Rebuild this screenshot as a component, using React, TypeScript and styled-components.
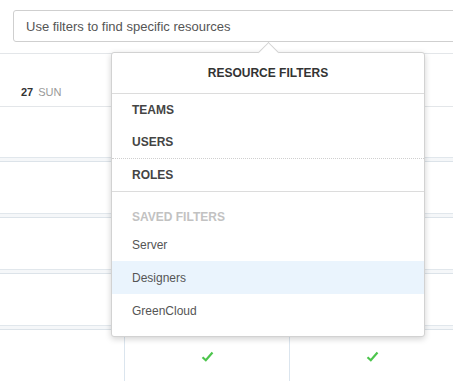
import React from 'react'
import styled, { createGlobalStyle } from 'styled-components'

const GlobalStyle = createGlobalStyle`
  body {
    margin: 0;
    font-family: "Liberation Sans", Arial, sans-serif;
    background: #fff;
    overflow: hidden;
  }
`

const Page = styled.div`
  position: relative;
  width: 453px;
  height: 382px;
  overflow: hidden;
`

const SearchArea = styled.div`
  padding: 10px 0 11px 13px;
  border-bottom: 1px solid #e3e6e9;
`

const SearchInput = styled.div`
  width: 460px;
  height: 30px;
  border: 1px solid #cfcfcf;
  border-radius: 3px;
  display: flex;
  align-items: center;
  padding-left: 12px;
  font-size: 13px;
  color: #555;
`

const DayHeader = styled.div`
  height: 53px;
  display: flex;
  align-items: flex-end;
  padding: 0 0 8px 21px;
  box-sizing: border-box;
  border-bottom: 1px solid #e3e6e9;
  font-size: 11px;
  gap: 5px;
`

const DayNum = styled.span`
  font-weight: bold;
  color: #333;
`

const DayName = styled.span`
  color: #999;
`

const Row = styled.div<{ h: number }>`
  height: ${p => p.h}px;
  display: flex;
`

const Band = styled.div`
  height: 3px;
  border-top: 1px solid #e1e7ec;
  border-bottom: 1px solid #dce3e9;
  background: #f5f7f9;
`

const Cell = styled.div<{ w: number }>`
  width: ${p => p.w}px;
  flex-shrink: 0;
  border-left: 1px solid #dbe5ee;
  display: flex;
  align-items: center;
  justify-content: center;
  padding-top: 2px;
  box-sizing: border-box;
  &:first-child {
    border-left: none;
  }
`

const Panel = styled.div`
  position: absolute;
  left: 111px;
  top: 52px;
  width: 312px;
  height: 283px;
  background: #fff;
  border: 1px solid #d2d2d2;
  border-radius: 3px;
  box-shadow: 0 2px 6px rgba(0, 0, 0, 0.18);
`

const Caret = styled.div`
  position: absolute;
  top: -8px;
  left: 149px;
  width: 14px;
  height: 14px;
  background: #fff;
  border-top: 1px solid #d2d2d2;
  border-left: 1px solid #d2d2d2;
  transform: rotate(45deg);
`

const PanelTitle = styled.div`
  position: relative;
  height: 40px;
  border-bottom: 1px solid #dcdcdc;
  display: flex;
  align-items: center;
  justify-content: center;
  font-size: 12px;
  font-weight: bold;
  color: #333;
`

const Group = styled.div`
  border-bottom: 1px solid #dcdcdc;
`

const GroupItem = styled.div<{ dotted?: boolean }>`
  height: 32px;
  display: flex;
  align-items: center;
  padding-left: 20px;
  font-size: 12px;
  font-weight: bold;
  color: #444;
  border-bottom: ${p => (p.dotted ? '1px dotted #cfcfcf' : 'none')};
`

const SavedLabel = styled.div`
  padding: 18px 20px 4px;
  line-height: 14px;
  font-size: 12px;
  font-weight: bold;
  color: #c2c2c2;
`

const SavedItem = styled.div<{ active?: boolean }>`
  height: 33px;
  display: flex;
  align-items: center;
  padding-left: 20px;
  font-size: 12px;
  color: #555;
  background: ${p => (p.active ? '#eaf4fd' : 'transparent')};
`

const Check = () => (
  <svg width="13" height="11" viewBox="0 0 13 11">
    <path d="M1.5 6.2 L4.8 9.2 L11.5 1.5" fill="none" stroke="#4dc54d" strokeWidth="2.2" />
  </svg>
)

export default function App() {
  return (
    <Page>
      <GlobalStyle />
      <SearchArea>
        <SearchInput>Use filters to find specific resources</SearchInput>
      </SearchArea>
      <DayHeader>
        <DayNum>27</DayNum>
        <DayName>SUN</DayName>
      </DayHeader>
      <Row h={50} />
      <Band />
      <Row h={51} />
      <Band />
      <Row h={51} />
      <Band />
      <Row h={51} />
      <Band />
      <Row h={51}>
        <Cell w={124} />
        <Cell w={165}>
          <Check />
        </Cell>
        <Cell w={166}>
          <Check />
        </Cell>
      </Row>

      <Panel>
        <Caret />
        <PanelTitle>RESOURCE FILTERS</PanelTitle>
        <Group>
          <GroupItem>TEAMS</GroupItem>
          <GroupItem dotted>USERS</GroupItem>
          <GroupItem>ROLES</GroupItem>
        </Group>
        <SavedLabel>SAVED FILTERS</SavedLabel>
        <SavedItem>Server</SavedItem>
        <SavedItem active>Designers</SavedItem>
        <SavedItem>GreenCloud</SavedItem>
      </Panel>
    </Page>
  )
}
